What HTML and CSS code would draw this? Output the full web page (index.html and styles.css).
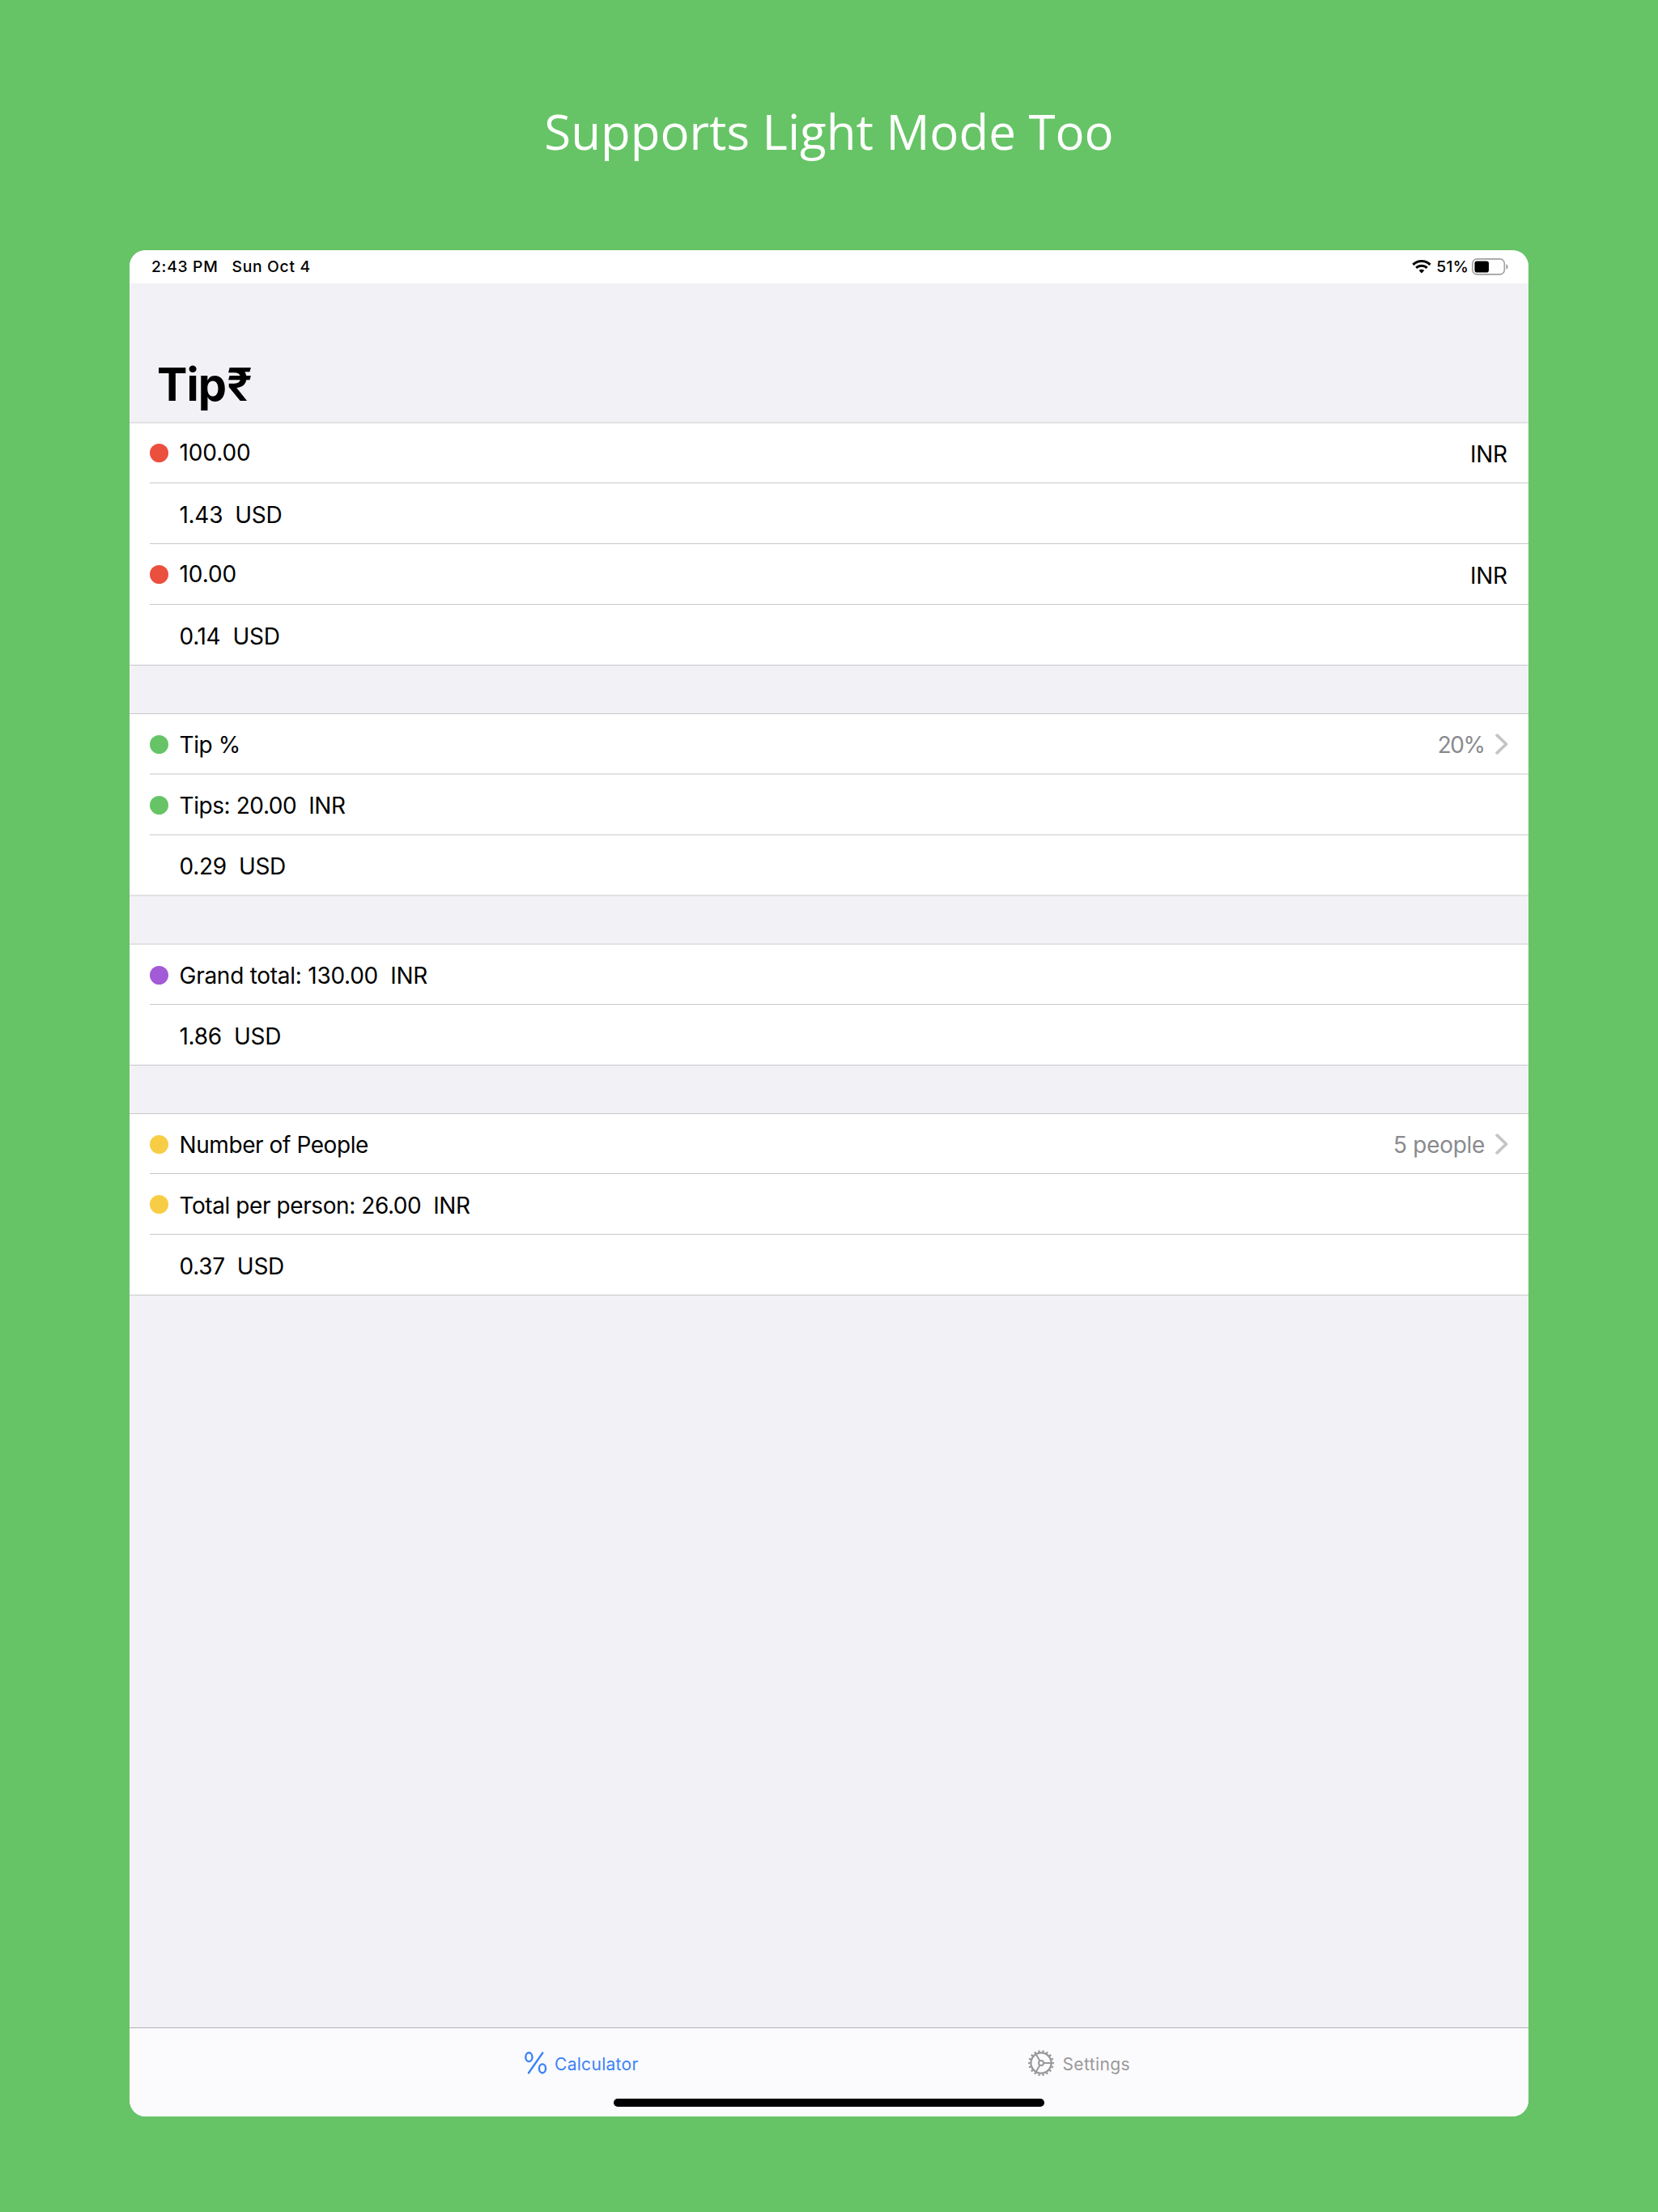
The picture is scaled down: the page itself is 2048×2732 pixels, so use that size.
FILE: index.html
```html
<!DOCTYPE html>
<html lang="en">
<head>
<meta charset="utf-8">
<title>Tip Calculator</title>
<link rel="stylesheet" href="styles.css">
</head>
<body>
<h1 class="headline">Supports Light Mode Too</h1>
<main class="screen">
  <header class="status">
    <span class="time">2:43 PM</span>
    <span class="date">Sun Oct 4</span>
    <svg class="wifi" viewBox="0 0 24 18" width="24" height="18"><g fill="none" stroke="#000" stroke-width="3"><path d="M1.4 6.900a15 15 0 0 1 21.200 0"/><path d="M5.300 10.900a9.500 9.500 0 0 1 13.400 0"/></g><path d="M12 17.400l-3.300-3.400a4.700 4.700 0 0 1 6.600 0z"/></svg>
    <span class="percent">51%</span>
    <svg class="battery" viewBox="0 0 46 21" width="46" height="21"><rect x=".9" y=".9" width="39.400" height="19" rx="5.500" fill="none" stroke="#a0a0a0" stroke-width="1.600"/><rect x="3.500" y="3.500" width="17.500" height="14" rx="2.800"/><path d="M42.400 7.200c3 1 3 5.600 0 6.600z" fill="#a0a0a0"/></svg>
  </header>
  <h2 class="title">Tip<span class="rupee">₹</span></h2>
  <section class="group">
    <i class="line soft full"></i>
    <div class="row short"><i class="dot red high"></i><span class="label amount">100.00</span><span class="unit">INR</span></div>
    <i class="line"></i>
    <div class="row"><span class="label converted">1.43 &nbsp;USD</span></div>
    <i class="line"></i>
    <div class="row"><i class="dot red"></i><span class="label amount">10.00</span><span class="unit">INR</span></div>
    <i class="line"></i>
    <div class="row"><span class="label converted">0.14 &nbsp;USD</span></div>
    <i class="line full"></i>
  </section>
  <section class="group compact">
    <i class="line full"></i>
    <div class="row short"><i class="dot green"></i><span class="label">Tip %</span><span class="value tight">20%</span><svg class="chevron" viewBox="0 0 16 26" width="16" height="26"><path d="M2.200 2.200L13.500 13 2.200 23.800"/></svg></div>
    <i class="line soft"></i>
    <div class="row short"><i class="dot green"></i><span class="label">Tips: 20.00 &nbsp;INR</span></div>
    <i class="line soft"></i>
    <div class="row short"><span class="label converted">0.29 &nbsp;USD</span></div>
    <i class="line soft full"></i>
  </section>
  <section class="group">
    <i class="line soft full"></i>
    <div class="row short"><i class="dot purple"></i><span class="label total">Grand total: 130.00 &nbsp;INR</span></div>
    <i class="line"></i>
    <div class="row"><span class="label converted">1.86 &nbsp;USD</span></div>
    <i class="line full"></i>
  </section>
  <section class="group">
    <i class="line full"></i>
    <div class="row short"><i class="dot yellow"></i><span class="label">Number of People</span><span class="value">5 people</span><svg class="chevron" viewBox="0 0 16 26" width="16" height="26"><path d="M2.200 2.200L13.500 13 2.200 23.800"/></svg></div>
    <i class="line"></i>
    <div class="row"><i class="dot yellow"></i><span class="label">Total per person: 26.00 &nbsp;INR</span></div>
    <i class="line"></i>
    <div class="row"><span class="label converted">0.37 &nbsp;USD</span></div>
    <i class="line full"></i>
  </section>
  <nav class="tabs">
    <a class="tab active">
      <svg viewBox="0 0 28 28" width="28" height="28" fill="none" stroke="currentColor" stroke-width="2.400" stroke-linecap="round"><ellipse cx="5.400" cy="6.700" rx="4.100" ry="5.400"/><ellipse cx="22" cy="20.800" rx="4.100" ry="5.400"/><path d="M22.300 1.500L5 26.200"/></svg>
      <span>Calculator</span>
    </a>
    <a class="tab">
      <svg viewBox="-16 -16 32 32" width="32" height="32" fill="none" stroke="currentColor"><circle r="12.600" stroke-width="2.300"/><circle r="14.600" stroke-width="2.600" pathLength="90" stroke-dasharray="2.300 2.700" stroke-dashoffset="1.150"/><circle r="3" stroke-width="2"/><path d="M3.500 0H12.500M-1.750 -3.030L-6.250 -10.800M-1.750 3.030L-6.250 10.800" stroke-width="2"/></svg>
      <span>Settings</span>
    </a>
    <i class="home"></i>
  </nav>
</main>
</body>
</html>
```
FILE: styles.css
```css
* { box-sizing: border-box; }

body {
  margin: 0;
  width: 2048px;
  height: 2732px;
  background: #66c466;
  color: #000;
  font-family: Inter, "Liberation Sans", sans-serif;
  display: flex;
  flex-direction: column;
  align-items: center;
}

.headline {
  margin: 0;
  height: 309px;
  padding-top: 121px;
  font: 400 60px/82px "Open Sans", sans-serif;
  color: #fff;
}

.screen {
  width: 1728px;
  height: 2305px;
  border-radius: 20px;
  background: #f2f1f6;
  overflow: hidden;
  display: flex;
  flex-direction: column;
}

/* Status bar */
.status {
  height: 41px;
  padding: 0 24px 1px 27px;
  background: #fff;
  display: flex;
  align-items: center;
  font-size: 19.3px;
  font-weight: 500;
  letter-spacing: 0.7px;
}
.date { margin-left: 17px; }
.wifi { margin-left: auto; margin-right: 6px; }
.percent { letter-spacing: 0.2px; margin-right: 4px; }

.title {
  height: 171px;
  margin: 0;
  padding: 91px 0 0 34px;
  font-size: 56px;
  line-height: 68px;
  font-weight: 700;
  letter-spacing: -0.9px;
}
.rupee { margin-left: 1px; font-weight: 600; }

/* Table groups */
.group {
  margin-bottom: 59px;
  background: #fff;
  display: flex;
  flex-direction: column;
}
.group.compact { margin-bottom: 58px; }
.line { flex: none; height: 1px; margin-left: 25px; background: #c8c8ca; }
.line.soft { height: 2px; background: #e2e2e4; }
.line.full { margin-left: 0; }

.row {
  height: 74px;
  padding: 3px 25px 0;
  display: flex;
  align-items: center;
  font-size: 28px;
}
.row.short { height: 73px; }

.dot { width: 23px; height: 23px; margin: -2px 13.5px 0 0; border-radius: 50%; }
.dot.high { margin-top: -4px; }
.red { background: #eb4f3d; }
.green { background: #66c466; }
.purple { background: #a35ad7; }
.yellow { background: #f7cd45; }

.label { letter-spacing: -0.42px; }
.label.total { letter-spacing: -0.26px; }
.label.converted { padding-left: 36.5px; letter-spacing: -0.3px; }
.label.amount { margin-top: -4px; letter-spacing: -0.1px; }
.unit { margin-left: auto; margin-right: 1.5px; letter-spacing: -0.4px; }
.value { margin-left: auto; margin-right: 13px; color: #8a8a8e; letter-spacing: -0.3px; }
.value.tight { letter-spacing: -1.5px; margin-right: 13.5px; }
.chevron { margin-top: -2px; }
.chevron path {
  fill: none;
  stroke: #c5c5c7;
  stroke-width: 3.8;
  stroke-linecap: round;
  stroke-linejoin: round;
}

/* Tab bar */
.tabs {
  position: relative;
  height: 110px;
  margin-top: auto;
  padding: 0 492px 24px 488px;
  border-top: 1px solid #b2b2b5;
  background: #fbfbfd;
  display: flex;
  justify-content: space-between;
  align-items: center;
  font-size: 21px;
  letter-spacing: 0.4px;
}
.tab { display: flex; align-items: center; gap: 10px; color: #999; }
.tab span { padding-top: 3px; }
.tab.active { color: #3b82f7; gap: 9px; letter-spacing: 0.3px; }
.home {
  position: absolute;
  left: 598px;
  bottom: 12px;
  width: 532px;
  height: 10px;
  border-radius: 5px;
  background: #000;
}
```
